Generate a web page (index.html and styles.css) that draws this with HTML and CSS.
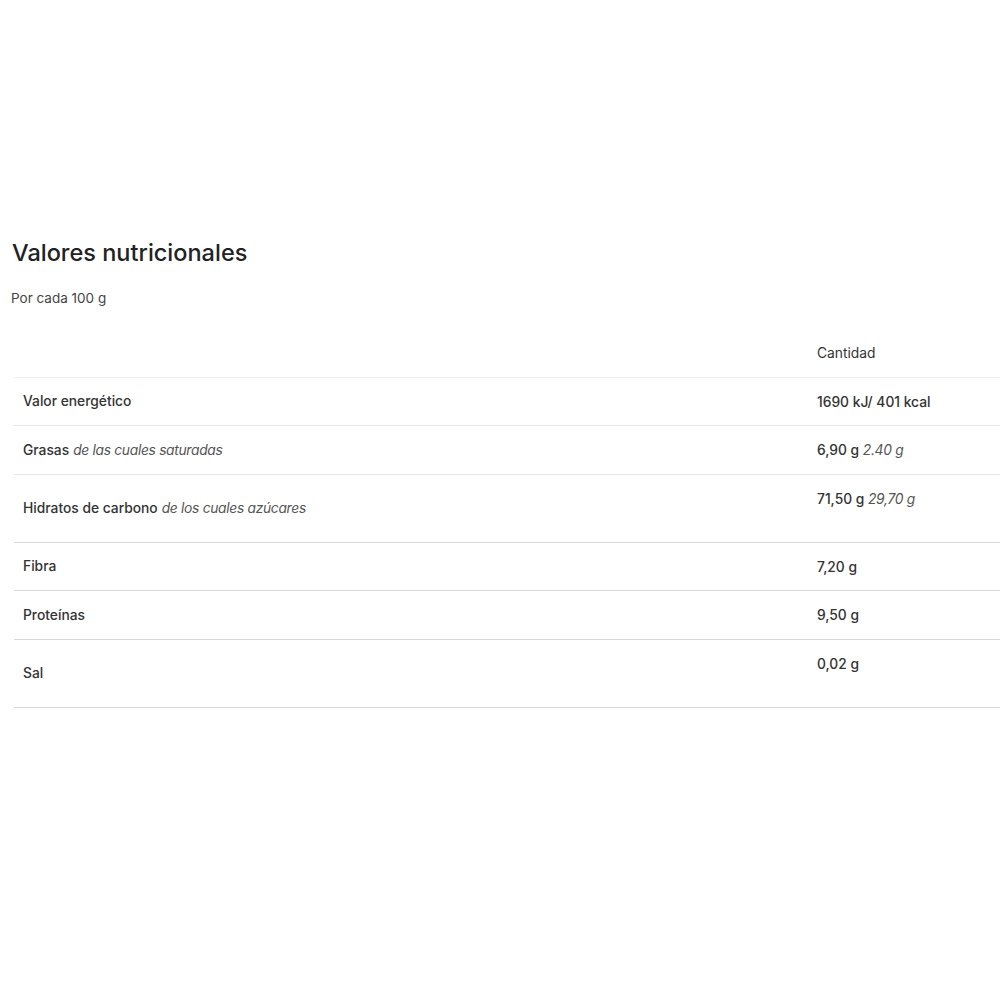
FILE: index.html
```html
<!DOCTYPE html>
<html lang="es">
<head>
<meta charset="utf-8">
<title>Valores nutricionales</title>
<link rel="stylesheet" href="styles.css">
</head>
<body>
<section class="nutri">
  <h2 class="title">Valores nutricionales</h2>
  <p class="sub">Por cada 100 g</p>
  <div class="table">
    <div class="row head">
      <div class="label"></div>
      <div class="value plain">Cantidad</div>
    </div>
    <div class="row light">
      <div class="label">Valor energético</div>
      <div class="value">1690 kJ/ 401 kcal</div>
    </div>
    <div class="row light">
      <div class="label">Grasas <em>de las cuales saturadas</em></div>
      <div class="value">6,90 g <em>2.40 g</em></div>
    </div>
    <div class="row">
      <div class="label">Hidratos de carbono <em>de los cuales azúcares</em></div>
      <div class="value tall">71,50 g <em>29,70 g</em></div>
    </div>
    <div class="row">
      <div class="label">Fibra</div>
      <div class="value">7,20 g</div>
    </div>
    <div class="row">
      <div class="label">Proteínas</div>
      <div class="value">9,50 g</div>
    </div>
    <div class="row">
      <div class="label">Sal</div>
      <div class="value tall">0,02 g</div>
    </div>
  </div>
</section>
</body>
</html>
```
FILE: styles.css
```css
html, body {
  margin: 0;
  padding: 0;
  background: #fff;
}
body {
  font-family: Inter, "Noto Sans", sans-serif;
  color: #333;
}
.nutri {
  padding-top: 238px;
}
.title {
  margin: 0 0 0 12px;
  font-size: 23.5px;
  line-height: 30px;
  font-weight: 500;
  color: #222;
}
.sub {
  margin: 22px 0 0 11px;
  font-size: 13.5px;
  line-height: 16px;
  color: #444;
}
.table {
  margin-left: 14px;
  margin-top: 23px;
}
.row {
  display: grid;
  grid-template-columns: 803px 1fr;
  border-bottom: 1px solid #d9d9d9;
  font-size: 13.8px;
  line-height: 16px;
  font-weight: 500;
  color: #333;
}
.row.head {
  border-bottom-color: #efefef;
}
.row.light {
  border-bottom-color: #e6e6e6;
}
.label {
  display: flex;
  align-items: center;
  gap: 4px;
  padding: 0 9px;
}
.value {
  padding: 16px 0 15.5px;
}
.value.tall {
  padding-bottom: 35px;
}
.value.plain {
  font-weight: 400;
}
em {
  font-style: italic;
  font-weight: 400;
  font-size: 13.8px;
  letter-spacing: -0.3px;
  color: #555;
}
```
